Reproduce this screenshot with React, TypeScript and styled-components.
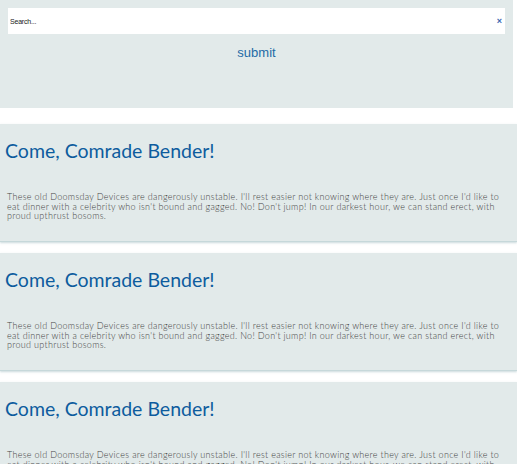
import React from "react";
import styled, { createGlobalStyle } from "styled-components";

const Global = createGlobalStyle`
  html, body { margin: 0; padding: 0; background: #ffffff; }
  body { font-family: "Liberation Sans", Arial, sans-serif; overflow: hidden; }
`;

const Page = styled.div`
  display: flex;
  flex-direction: column;
  width: 517px;
`;

const SearchPanel = styled.form`
  background: #e2eaea;
  margin-right: 4px;
  height: 108px;
  box-sizing: border-box;
  padding: 8px 8px 0 8px;
  display: flex;
  flex-direction: column;
  align-items: stretch;
`;

const SearchBox = styled.div`
  height: 26px;
  background: #ffffff;
  display: flex;
  align-items: center;
  justify-content: space-between;
  padding: 0 3px 0 2px;
  box-sizing: border-box;
`;

const SearchInput = styled.input`
  border: none;
  outline: none;
  background: transparent;
  font-family: "Liberation Sans", Arial, sans-serif;
  font-size: 7px;
  letter-spacing: -0.2px;
  color: #222;
  padding: 0;
  flex: 1;
  &::placeholder { color: #222; }
`;

const Clear = styled.span`
  color: #3a66b0;
  font-size: 9px;
  font-weight: bold;
  line-height: 1;
`;

const Submit = styled.button`
  align-self: center;
  margin-top: 11px;
  background: none;
  border: none;
  padding: 0;
  color: #1d6aa6;
  font-family: "Liberation Sans", Arial, sans-serif;
  font-size: 13px;
  cursor: pointer;
`;

const List = styled.div`
  display: flex;
  flex-direction: column;
  gap: 11px;
  margin-top: 16px;
`;

const Card = styled.article`
  background: #e2eaea;
  height: 118px;
  box-sizing: border-box;
  border-bottom: 1px solid #c6d8da;
  box-shadow: 0 1px 2px rgba(150, 180, 185, 0.5);
  padding: 15px 6px 0 5px;
`;

const Title = styled.h2`
  margin: 0;
  font-family: "Lato", "Open Sans", sans-serif;
  font-weight: 400;
  font-size: 19.5px;
  line-height: 24px;
  color: #0d5c9e;
`;

const Body = styled.p`
  margin: 29px 0 0 2px;
  max-width: 498px;
  font-family: "Lato", sans-serif;
  font-weight: 300;
  font-size: 9px;
  letter-spacing: 0.3px;
  line-height: 9.5px;
  color: #444;
`;

const posts = [0, 1, 2];

export default function App() {
  return (
    <Page>
      <Global />
      <SearchPanel onSubmit={(e) => e.preventDefault()}>
        <SearchBox>
          <SearchInput placeholder="Search..." />
          <Clear>×</Clear>
        </SearchBox>
        <Submit type="submit">submit</Submit>
      </SearchPanel>
      <List>
        {posts.map((i) => (
          <Card key={i}>
            <Title>Come, Comrade Bender!</Title>
            <Body>
              These old Doomsday Devices are dangerously unstable. I'll rest easier not knowing where they are. Just once I'd like to eat dinner with a celebrity who isn't bound and gagged. No! Don't jump! In our darkest hour, we can stand erect, with proud upthrust bosoms.
            </Body>
          </Card>
        ))}
      </List>
    </Page>
  );
}
